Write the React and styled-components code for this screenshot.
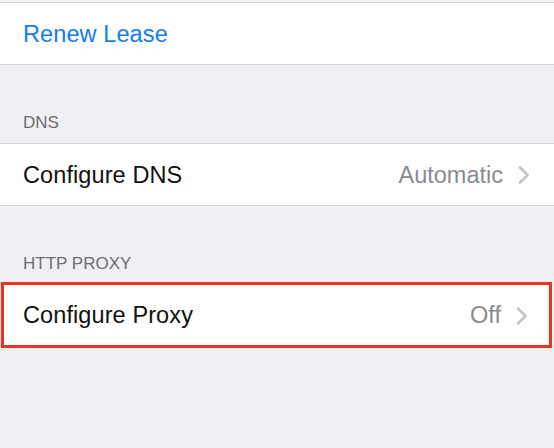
import styled, { createGlobalStyle } from 'styled-components';

const GlobalStyle = createGlobalStyle`
  html, body {
    margin: 0;
    padding: 0;
    background: #efeff4;
  }
  body {
    font-family: 'Liberation Sans', Arial, sans-serif;
    -webkit-font-smoothing: antialiased;
  }
`;

const Screen = styled.div`
  width: 554px;
  height: 448px;
  background: #efeff4;
  padding-top: 2px;
  box-sizing: border-box;
  overflow: hidden;
`;

const Group = styled.div`
  background: #fff;
  border-top: 1px solid #d6d6da;
  border-bottom: 1px solid #d6d6da;
`;

const Highlight = styled.div`
  margin: 0 2px 0 1px;
  border: 3px solid #f2321d;
  background: #fff;
`;

const Row = styled.div`
  height: ${(p) => p.$height || 61}px;
  display: flex;
  align-items: center;
  justify-content: space-between;
  padding: 1px ${(p) => p.$right || 24}px 0 ${(p) => p.$left || 23}px;
  box-sizing: border-box;
`;

const Label = styled.span`
  font-size: 23.5px;
  color: ${(p) => (p.$action ? '#127cf6' : '#111')};
  letter-spacing: 0.1px;
`;

const Detail = styled.span`
  display: flex;
  align-items: center;
  gap: 15px;
  font-size: 23.5px;
  color: #8a8a8f;
`;

const SectionHeader = styled.div`
  height: ${(p) => p.$height}px;
  display: flex;
  align-items: flex-end;
  padding: 0 23px ${(p) => p.$bottom}px;
  box-sizing: border-box;
  font-size: 17px;
  line-height: 1;
  color: #6d6d72;
`;

const Chevron = () => (
  <svg width="12" height="18" viewBox="0 0 12 18" fill="none">
    <path d="M2 1.5 L9.5 9 L2 16.5" stroke="#c4c4c8" strokeWidth="2.6" strokeLinecap="round" strokeLinejoin="round" />
  </svg>
);

export default function App() {
  return (
    <>
      <GlobalStyle />
      <Screen>
        <Group>
          <Row>
            <Label $action>Renew Lease</Label>
          </Row>
        </Group>
        <SectionHeader $height={78} $bottom={12}>DNS</SectionHeader>
        <Group>
          <Row>
            <Label>Configure DNS</Label>
            <Detail>
              Automatic <Chevron />
            </Detail>
          </Row>
        </Group>
        <SectionHeader $height={76} $bottom={10}>HTTP PROXY</SectionHeader>
        <Highlight>
          <Row $height={60} $left={19} $right={21}>
            <Label>Configure Proxy</Label>
            <Detail>
              Off <Chevron />
            </Detail>
          </Row>
        </Highlight>
      </Screen>
    </>
  );
}
